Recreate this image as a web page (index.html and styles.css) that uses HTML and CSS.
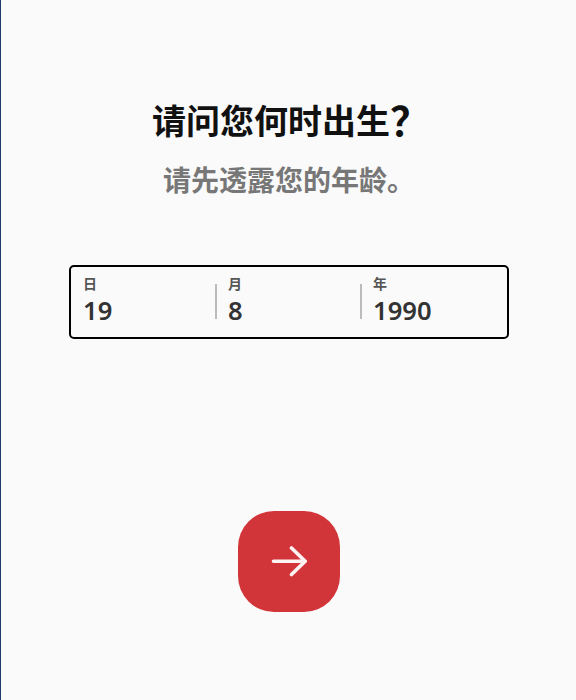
FILE: index.html
```
<!DOCTYPE html>
<html lang="zh">
<head>
<meta charset="utf-8">
<title>请问您何时出生？</title>
<link rel="stylesheet" href="styles.css">
</head>
<body>
<main class="page">
  <h1 class="title">请问您何时出生<span class="qmark">？</span></h1>
  <p class="subtitle">请先透露您的年龄。</p>
  <div class="date-box">
    <div class="field"><span class="label">日</span><span class="value">19</span></div>
    <div class="field"><span class="label">月</span><span class="value">8</span></div>
    <div class="field"><span class="label">年</span><span class="value">1990</span></div>
  </div>
  <button class="next" aria-label="下一步">
    <svg class="arrow" viewBox="0 0 36 34" width="36" height="34"><path d="M2.5 16.2H34M20.5 3L34.2 16.2L20.5 29.5" fill="none" stroke="#fdf3f3" stroke-width="3.6" stroke-linecap="round" stroke-linejoin="miter"/></svg>
  </button>
</main>
</body>
</html>
```
FILE: styles.css
```
* { box-sizing: border-box; }
html, body { margin: 0; height: 100%; }
body {
  background: #fafafa;
  font-family: "Noto Sans", "Noto Sans CJK SC", sans-serif;
  overflow: hidden;
}
.page {
  height: 700px;
  border-left: 1px solid #1f3a6e;
  padding-left: 1px;
  display: flex;
  flex-direction: column;
  align-items: center;
  padding-top: 97px;
}
.title {
  margin: 0;
  font-size: 34px;
  line-height: 48px;
  font-weight: 700;
  color: #111;
  white-space: nowrap;
}
.qmark { font-size: 40px; line-height: 40px; font-weight: 600; margin-right: -4px; vertical-align: -2px; }
.subtitle {
  margin: 15px 0 0;
  font-size: 28px;
  line-height: 40px;
  font-weight: 700;
  color: #777;
}
.date-box {
  margin-top: 65px;
  width: 440px;
  height: 74px;
  border: 2px solid #000;
  border-radius: 5px;
  display: grid;
  grid-template-columns: 144px 145px 1fr;
  padding-top: 7px;
}
.field {
  display: flex;
  flex-direction: column;
  padding-left: 13px;
  position: relative;
}
.field:first-child { padding-left: 12px; }
.field + .field::before {
  content: "";
  position: absolute;
  left: 0;
  top: 10px;
  height: 35px;
  width: 2px;
  background: #bbb;
}
.label {
  font-size: 14px;
  line-height: 20px;
  font-weight: 700;
  color: #555;
}
.value {
  font-size: 25.6px;
  line-height: 33px;
  font-weight: 600;
  color: #333;
}
.next {
  margin-top: 172px;
  width: 102px;
  height: 101px;
  border: 0;
  border-radius: 36px;
  background: #d23539;
  display: flex;
  align-items: center;
  justify-content: center;
  padding: 0;
}
.arrow { display: block; }
```
